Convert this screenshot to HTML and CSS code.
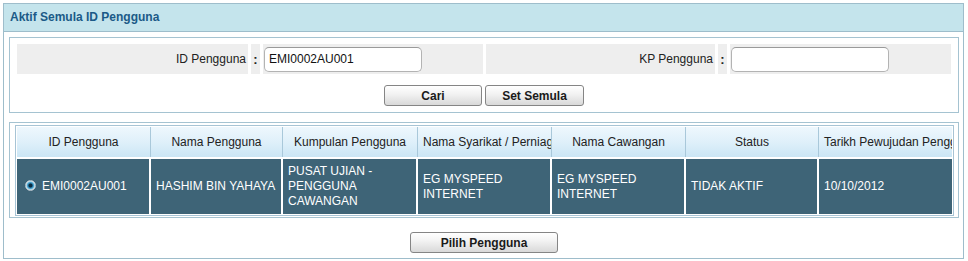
FILE: index.html
```html
<!DOCTYPE html>
<html>
<head>
<meta charset="utf-8">
<link rel="stylesheet" href="styles.css">
</head>
<body>
<div class="panel">
  <div class="panel-head">Aktif Semula ID Pengguna</div>
  <div class="panel-body">
    <div class="search-box">
      <div class="search-row">
        <div class="cell label">ID Pengguna</div>
        <div class="cell colon">:</div>
        <div class="cell field"><input class="text-input" type="text" value="EMI0002AU001"></div>
        <div class="cell label">KP Pengguna</div>
        <div class="cell colon">:</div>
        <div class="cell field"><input class="text-input" type="text" value=""></div>
      </div>
      <div class="btn-row">
        <button class="btn btn-cari">Cari</button>
        <button class="btn btn-reset">Set Semula</button>
      </div>
    </div>

    <div class="result-box">
      <div class="table-wrap">
        <table class="result-table">
          <colgroup>
            <col class="c1"><col class="c2"><col class="c3"><col class="c4"><col class="c5"><col class="c6"><col class="c7">
          </colgroup>
          <thead>
            <tr>
              <th>ID Pengguna</th>
              <th>Nama Pengguna</th>
              <th>Kumpulan Pengguna</th>
              <th>Nama Syarikat / Perniagaan</th>
              <th>Nama Cawangan</th>
              <th>Status</th>
              <th class="last">Tarikh Pewujudan Pengguna</th>
            </tr>
          </thead>
          <tbody>
            <tr>
              <td><span class="radio"></span>EMI0002AU001</td>
              <td>HASHIM BIN YAHAYA</td>
              <td>PUSAT UJIAN - PENGGUNA CAWANGAN</td>
              <td>EG MYSPEED INTERNET</td>
              <td>EG MYSPEED INTERNET</td>
              <td>TIDAK AKTIF</td>
              <td class="last">10/10/2012</td>
            </tr>
          </tbody>
        </table>
      </div>
    </div>

    <div class="btn-row btn-row-bottom">
      <button class="btn btn-pilih">Pilih Pengguna</button>
    </div>
  </div>
</div>
</body>
</html>
```

FILE: styles.css
```css
html, body {
  margin: 0;
  padding: 0;
  background: #ffffff;
}

body {
  font-family: "Liberation Sans", Arial, sans-serif;
  font-size: 12px;
  color: #222222;
}

.panel {
  margin: 3px 4px 0 3px;
  border: 1px solid #9ebdcb;
  background: #ffffff;
}

.panel-head {
  height: 27px;
  line-height: 27px;
  padding-left: 6px;
  background: #c4e4ec;
  border-bottom: 1px solid #9ebdcb;
  color: #1b5a87;
  font-weight: bold;
  font-size: 12px;
}

.panel-body {
  padding: 5px 4px 5px 5px;
}

.search-box {
  border: 1px solid #a5c3d1;
  padding: 6px 7px 6px 7px;
}

.search-row {
  display: grid;
  grid-template-columns: 231px 9px 220px 229px 9px 221px;
  column-gap: 3px;
  height: 30px;
}

.cell {
  background: #eeeeee;
  display: flex;
  align-items: center;
}

.label {
  justify-content: flex-end;
  padding-right: 2px;
  color: #222222;
}

.colon {
  justify-content: center;
  font-weight: bold;
  font-size: 13px;
}

.field {
  padding-left: 1px;
}

.text-input {
  box-sizing: border-box;
  width: 158px;
  height: 25px;
  margin: 0;
  padding: 0 4px;
  border: 1px solid #b3b3b3;
  border-top-color: #9a9a9a;
  border-radius: 5px;
  background: #ffffff;
  font-family: "Liberation Sans", Arial, sans-serif;
  font-size: 12px;
  color: #111111;
  outline: none;
}

.btn-row {
  display: flex;
  justify-content: center;
  gap: 3px;
  margin-top: 11px;
}

.btn {
  box-sizing: border-box;
  height: 21px;
  margin: 0;
  padding: 0;
  border: 1px solid #858585;
  border-radius: 3px;
  background: linear-gradient(#ffffff 0%, #f3f3f3 40%, #d9d9d9 100%);
  font-family: "Liberation Sans", Arial, sans-serif;
  font-size: 12px;
  font-weight: bold;
  color: #1a1a1a;
}

.btn-cari { width: 98px; }
.btn-reset { width: 99px; }
.btn-pilih { width: 148px; }

.btn-row-bottom {
  margin-top: 14px;
}

.result-box {
  margin-top: 9px;
  border: 1px solid #a5c3d1;
  padding: 2px 4px 1px 5px;
}

.table-wrap {
  width: 935px;
  border: 1px solid #a7c4d5;
  padding: 1px;
  background: #ffffff;
}

.result-table {
  width: 935px;
  table-layout: fixed;
  border-collapse: separate;
  border-spacing: 0;
}

.c1 { width: 134px; }
.c2 { width: 132px; }
.c3 { width: 135px; }
.c4 { width: 134px; }
.c5 { width: 134px; }
.c6 { width: 133px; }
.c7 { width: 133px; }

.result-table th {
  box-sizing: border-box;
  height: 30px;
  padding: 0 5px;
  border-right: 1px solid #a9c8da;
  background: linear-gradient(#eef7fd 0%, #dff0fa 50%, #cbe6f5 100%);
  font-weight: normal;
  font-size: 12px;
  color: #222222;
  text-align: center;
  white-space: nowrap;
  overflow: hidden;
}

.result-table td {
  padding: 5px 5px;
  border-top: 2px solid #ffffff;
  border-right: 2px solid #ffffff;
  background: #3e6477;
  color: #ffffff;
  font-size: 12px;
  line-height: 15px;
  vertical-align: middle;
  text-align: left;
  overflow: hidden;
}

.result-table th.last,
.result-table td.last {
  border-right: none;
}

.radio {
  display: inline-block;
  box-sizing: border-box;
  width: 11px;
  height: 11px;
  margin: 0 6px 0 3px;
  vertical-align: -1px;
  border-radius: 50%;
  border: 1px solid #b9c6ce;
  background: radial-gradient(circle at 50% 50%, #0b2c40 0, #0b2c40 1.6px, #2a85b6 2.4px, #5fb0d6 3.4px, #a8d6ea 4px, #dfe6ea 4.5px);
}
```
